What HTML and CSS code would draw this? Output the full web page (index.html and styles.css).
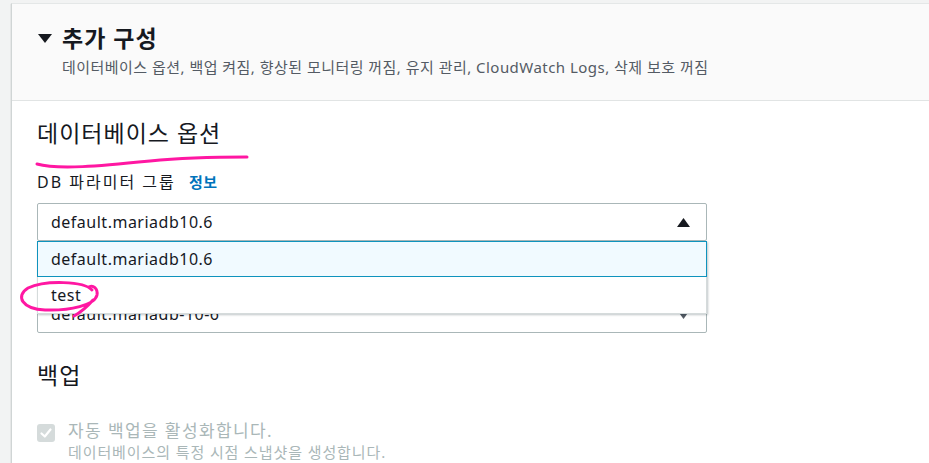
FILE: index.html
```html
<!DOCTYPE html>
<html lang="ko">
<head>
<meta charset="utf-8">
<title>추가 구성</title>
<link rel="stylesheet" href="styles.css">
</head>
<body>
<div class="page">
  <section class="card">
    <header class="card-head">
      <div class="head-row">
        <svg class="caret" width="14" height="9" viewBox="0 0 14 9"><path d="M0 0 H14 L7 9 Z" fill="#16191f"/></svg>
        <h2 class="title">추가 구성</h2>
      </div>
      <p class="sub">데이터베이스 옵션, 백업 켜짐, 향상된 모니터링 꺼짐, 유지 관리, CloudWatch Logs, 삭제 보호 꺼짐</p>
    </header>
    <div class="card-body">
      <h3 class="sec-title">데이터베이스 옵션</h3>
      <div class="field">
        <div class="label">DB 파라미터 그룹 <a class="info">정보</a></div>
        <div class="select-wrap">
          <div class="select">
            <span>default.mariadb10.6</span>
            <svg width="13" height="9" viewBox="0 0 13 9"><path d="M6.5 0 L13 9 H0 Z" fill="#16191f"/></svg>
          </div>
          <ul class="menu">
            <li class="opt opt-hl">default.mariadb10.6</li>
            <li class="opt">test</li>
          </ul>
        </div>
      </div>
      <div class="field field-2">
        <div class="select">
          <span>default.mariadb-10-6</span>
          <svg width="13" height="9" viewBox="0 0 13 9"><path d="M0 0 H13 L6.5 9 Z" fill="#545b64"/></svg>
        </div>
      </div>
      <h3 class="sec-title sec-backup">백업</h3>
      <div class="check-row">
        <span class="checkbox">
          <svg width="18" height="18" viewBox="0 0 18 18"><path d="M4.5 9.5 L7.8 12.5 L13.5 5.5" fill="none" stroke="#fff" stroke-width="2.2" stroke-linecap="round" stroke-linejoin="round"/></svg>
        </span>
        <div class="check-text">
          <div class="check-label">자동 백업을 활성화합니다.</div>
          <div class="check-desc">데이터베이스의 특정 시점 스냅샷을 생성합니다.</div>
        </div>
      </div>
    </div>
  </section>
  <svg class="annot" width="929" height="463" viewBox="0 0 929 463">
    <path d="M37 164 C 58 170, 100 166, 150 161 C 190 157, 220 157, 247 157" fill="none" stroke="#ff17a2" stroke-width="3" stroke-linecap="round"/>
    <path d="M92 290 C 84 281, 45 280, 28 288 C 15 296, 22 309, 45 310 C 70 311, 95 305, 97 295 C 98 288, 93 285, 89 287 M93 300 C 87 307, 81 312, 74 316" fill="none" stroke="#ff17a2" stroke-width="3" stroke-linecap="round" stroke-linejoin="round"/>
  </svg>
</div>
</body>
</html>
```

FILE: styles.css
```css
* { box-sizing: border-box; }
html, body { margin: 0; padding: 0; }
body {
  background: #f2f3f3;
  font-family: "Noto Sans", "Noto Sans CJK KR", sans-serif;
  color: #16191f;
  width: 929px;
  height: 463px;
  overflow: hidden;
}
.page {
  position: relative;
  padding: 3px 0 0 11px;
  height: 463px;
}
.card {
  background: #ffffff;
  border-top: 1px solid #e4e7e7;
  border-left: 1px solid #d0d5d5;
  box-shadow: 0 1px 1px rgba(0,28,36,0.3);
  height: 470px;
}
.card-head {
  background: #fafafa;
  border-bottom: 1px solid #e1e4e4;
  padding: 19px 20px 23px 26px;
}
.head-row {
  display: flex;
  align-items: center;
  gap: 10px;
}
.caret { flex: none; margin-top: 1px; }
.title {
  margin: 0;
  font-size: 23px;
  line-height: 30px;
  font-weight: 700;
  letter-spacing: 1px;
}
.sub {
  margin: 4px 0 0 24px;
  font-size: 15px;
  line-height: 20px;
  letter-spacing: 0.47px;
  color: #545b64;
}
.card-body {
  padding: 16px 20px 0 25px;
}
.sec-title {
  margin: 0;
  font-size: 23px;
  line-height: 32px;
  font-weight: 400;
  letter-spacing: 1px;
}
.field {
  margin-top: 22px;
  width: 670px;
}
.field-2 { margin-top: 54px; }
.label {
  font-size: 16px;
  line-height: 22px;
  letter-spacing: 2px;
  margin-bottom: 10px;
}
.info {
  color: #0073bb;
  font-weight: 700;
  font-size: 15px;
  letter-spacing: 0.5px;
  margin-left: 7px;
}
.select-wrap { position: relative; }
.select {
  height: 38px;
  border: 1px solid #aab7b8;
  border-radius: 2px;
  background: #fff;
  display: flex;
  align-items: center;
  justify-content: space-between;
  padding: 0 16px 0 13px;
  font-size: 16px;
  letter-spacing: 0.5px;
}
.menu {
  position: absolute;
  left: 0;
  top: 38px;
  width: 670px;
  margin: 0;
  padding: 0;
  list-style: none;
  background: #fff;
  border: 1px solid #d5dbdb;
  border-top: none;
  box-shadow: 1px 1px 2px rgba(0,28,36,0.25);
  z-index: 2;
}
.opt {
  height: 36px;
  display: flex;
  align-items: center;
  padding: 0 13px;
  font-size: 16px;
  letter-spacing: 0.5px;
}
.opt-hl {
  background: #f1faff;
  border: 1px solid #0f93bd;
  margin: 0 -1px;
  padding-left: 13px;
}
.sec-backup { margin-top: 26px; }
.check-row {
  display: flex;
  gap: 13px;
  margin-top: 29px;
}
.checkbox {
  flex: none;
  width: 18px;
  height: 18px;
  margin-top: 4px;
  border-radius: 3px;
  background: #d5dbdb;
  display: flex;
}
.check-label {
  font-size: 17px;
  line-height: 22px;
  letter-spacing: 1.4px;
  color: #aab7b8;
}
.check-desc {
  font-size: 15px;
  line-height: 20px;
  letter-spacing: 0.9px;
  color: #aab7b8;
}
.annot {
  position: absolute;
  left: 0;
  top: 0;
  pointer-events: none;
  z-index: 5;
}
```
